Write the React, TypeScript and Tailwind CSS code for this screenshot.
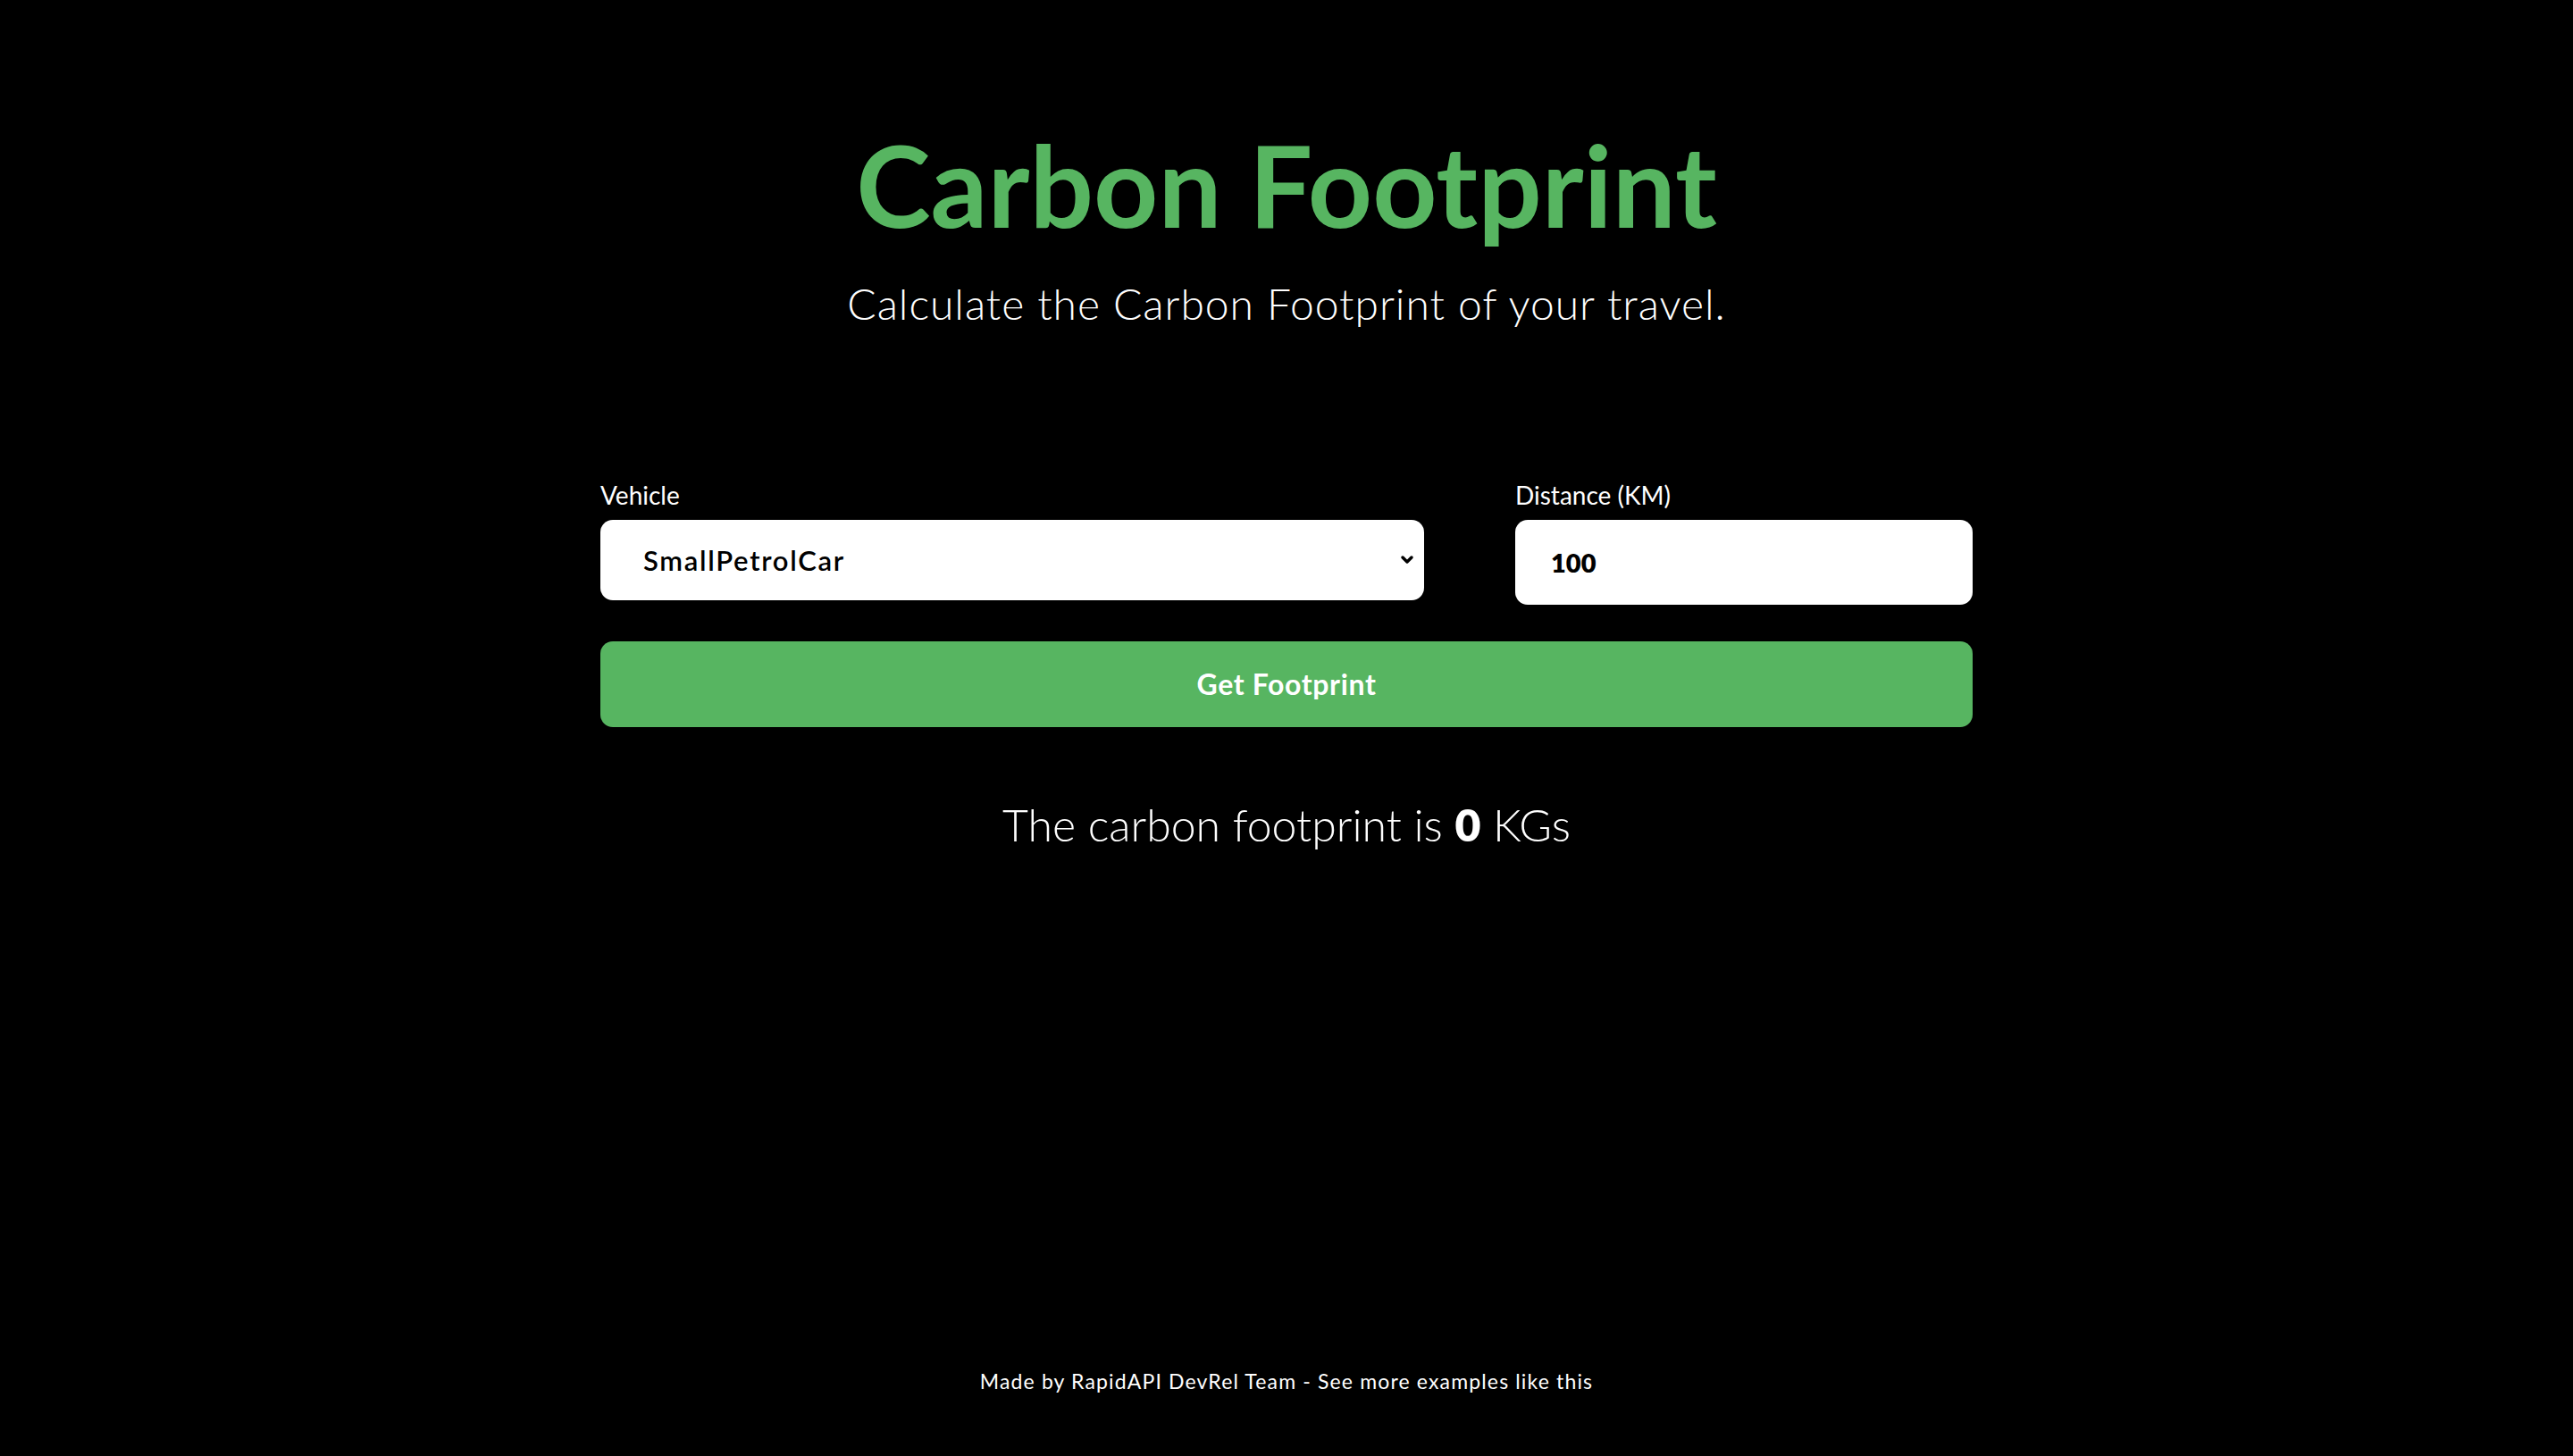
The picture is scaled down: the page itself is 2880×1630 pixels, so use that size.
import React, { useState } from 'react';

const vehicles = [
  'SmallDieselCar',
  'MediumDieselCar',
  'LargeDieselCar',
  'SmallPetrolCar',
  'MediumPetrolCar',
  'LargePetrolCar',
  'SmallMotorBike',
  'MediumMotorBike',
  'LargeMotorBike',
];

const App: React.FC = () => {
  const [vehicle, setVehicle] = useState('SmallPetrolCar');
  const [distance, setDistance] = useState('100');
  const [footprint] = useState(0);

  return (
    <div className="min-h-screen bg-black flex flex-col items-center font-['Lato','Open_Sans',sans-serif] text-white">
      <h1 className="mt-[144px] text-[126px] leading-none font-bold text-[#57b561]">Carbon Footprint</h1>
      <p className="mt-[46px] text-[48px] leading-none font-light tracking-[0.02em]">
        Calculate the Carbon Footprint of your travel.
      </p>

      <form className="mt-[176px] w-[1536px] flex flex-col" onSubmit={(e) => e.preventDefault()}>
        <div className="flex justify-between items-start">
          <label className="w-3/5 flex flex-col">
            <span className="text-[28px] leading-none mb-[14px]">Vehicle</span>
            <div className="relative">
              <select
                value={vehicle}
                onChange={(e) => setVehicle(e.target.value)}
                className="appearance-none w-full h-[90px] rounded-[14px] bg-white text-black pl-[48px] text-[31px] tracking-[0.055em] font-semibold outline-none"
              >
                {vehicles.map((v) => (
                  <option key={v} value={v}>
                    {v}
                  </option>
                ))}
              </select>
              <svg
                className="absolute right-[10px] top-[37px] w-[18px] h-[16px] pointer-events-none"
                viewBox="0 0 18 16"
                fill="none"
                stroke="black"
                strokeWidth="3.5"
                strokeLinecap="round"
                strokeLinejoin="round"
              >
                <path d="M4 5l5 5 5-5" />
              </svg>
            </div>
          </label>
          <label className="w-1/3 flex flex-col">
            <span className="text-[28px] leading-none mb-[14px]">Distance (KM)</span>
            <input
              type="text"
              value={distance}
              onChange={(e) => setDistance(e.target.value)}
              className="w-full h-[95px] rounded-[14px] bg-white text-black pl-[40px] text-[29px] font-extrabold outline-none"
            />
          </label>
        </div>
        <button
          type="submit"
          className="mt-[41px] h-[96px] w-full rounded-[14px] bg-[#57b561] text-white text-[32px] tracking-[0.02em] font-bold"
        >
          Get Footprint
        </button>
      </form>

      <p className="mt-[84px] text-[50px] leading-none font-light">
        The carbon footprint is <span className="font-extrabold">{footprint}</span> KGs
      </p>

      <footer className="mt-auto mb-[72px] text-[23px] leading-none tracking-[0.05em]">
        Made by RapidAPI DevRel Team - See more examples like this
      </footer>
    </div>
  );
};

export default App;
